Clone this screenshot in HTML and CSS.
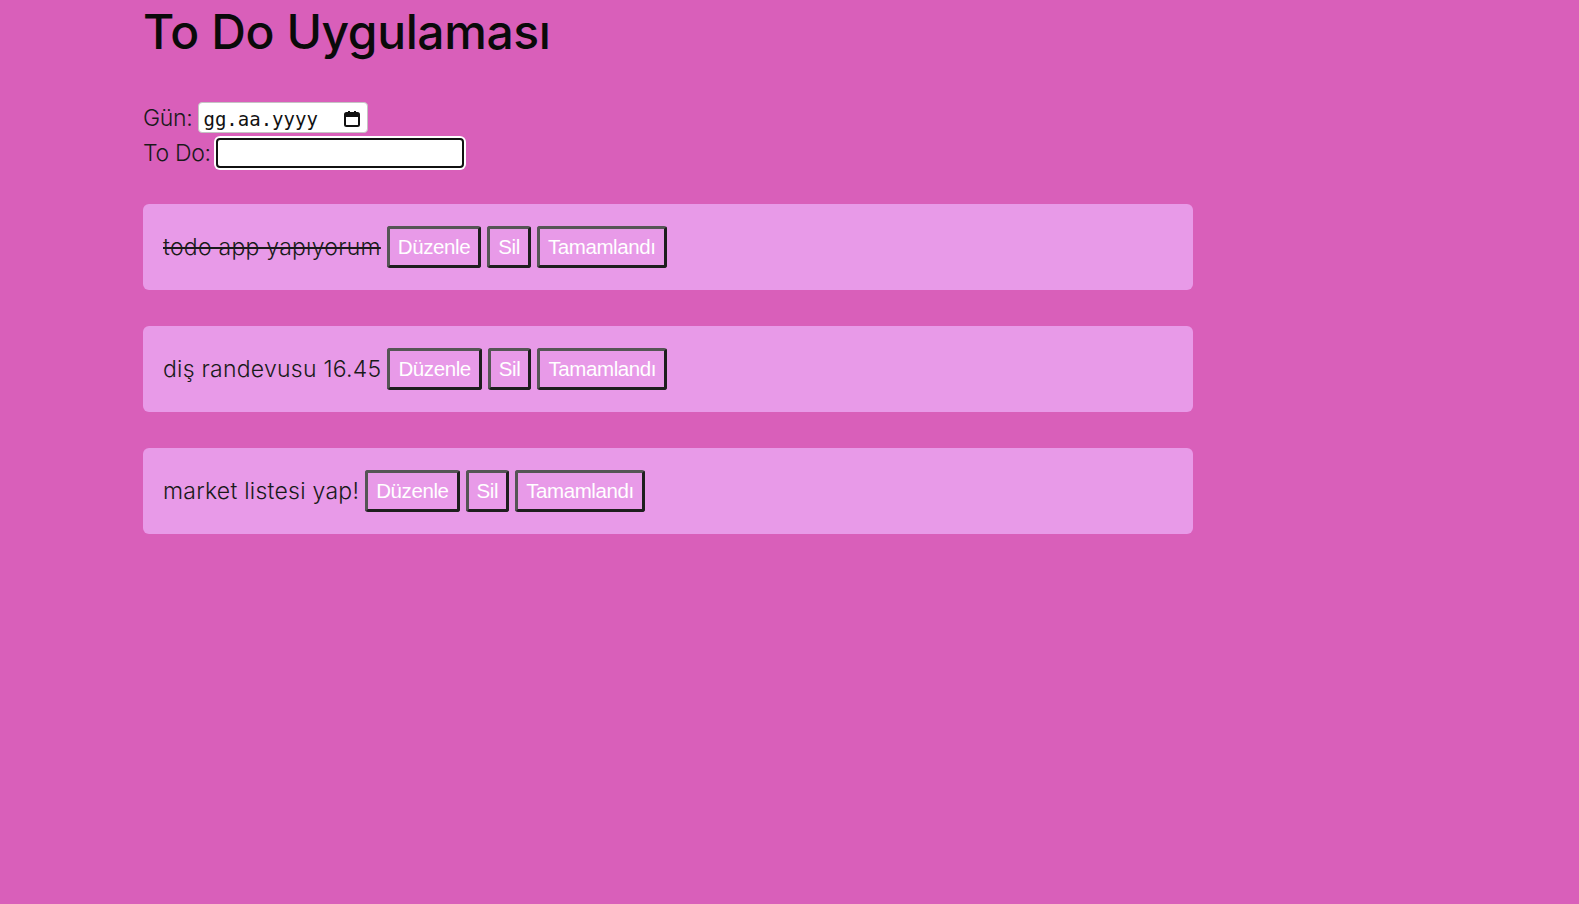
FILE: index.html
```html
<!DOCTYPE html>
<html lang="tr">
<head>
<meta charset="utf-8">
<title>To Do Uygulaması</title>
<link rel="stylesheet" href="styles.css">
</head>
<body>
<div class="app">
  <h1 class="title">To Do Uygulaması</h1>
  <form class="form">
    <div class="field">
      <label class="label" for="gun">Gün:</label>
      <span class="date-box">
        <input class="date-input" id="gun" type="text" placeholder="gg.aa.yyyy">
        <svg class="cal-icon" width="18" height="18" viewBox="0 0 18 18" aria-hidden="true">
          <rect x="2" y="3" width="14" height="13" rx="1.5" fill="none" stroke="#111" stroke-width="2"/>
          <rect x="2" y="3" width="14" height="4" fill="#111"/>
          <rect x="5" y="1" width="2" height="3" fill="#111"/>
          <rect x="11" y="1" width="2" height="3" fill="#111"/>
        </svg>
      </span>
    </div>
    <div class="field">
      <label class="label" for="todo">To Do:</label>
      <input class="text-input" id="todo" type="text">
    </div>
  </form>
  <ul class="list">
    <li class="card">
      <span class="task done">todo app yapıyorum</span>
      <button class="btn" type="button">Düzenle</button>
      <button class="btn" type="button">Sil</button>
      <button class="btn" type="button">Tamamlandı</button>
    </li>
    <li class="card">
      <span class="task">diş randevusu 16.45</span>
      <button class="btn" type="button">Düzenle</button>
      <button class="btn" type="button">Sil</button>
      <button class="btn" type="button">Tamamlandı</button>
    </li>
    <li class="card">
      <span class="task">market listesi yap!</span>
      <button class="btn" type="button">Düzenle</button>
      <button class="btn" type="button">Sil</button>
      <button class="btn" type="button">Tamamlandı</button>
    </li>
  </ul>
</div>
</body>
</html>
```

FILE: styles.css
```css
html, body {
  margin: 0;
  padding: 0;
  background: #d95fba;
}
body {
  font-family: Inter, "Noto Sans", sans-serif;
  color: #111;
  min-height: 904px;
}
.app {
  width: 1050px;
  padding-left: 143px;
}
.title {
  margin: 0;
  padding-top: 2px;
  font-size: 48px;
  font-weight: 500;
  letter-spacing: -0.4px;
  line-height: 60px;
  color: #0a0a0a;
}
.form {
  margin-top: 40px;
  display: flex;
  flex-direction: column;
  gap: 5px;
}
.field {
  display: flex;
  align-items: center;
  gap: 6px;
}
.label {
  font-size: 23px;
  font-weight: 300;
  color: #1a1a1a;
  letter-spacing: -0.3px;
}
.date-box {
  display: flex;
  align-items: center;
  width: 170px;
  height: 31px;
  box-sizing: border-box;
  border: 1px solid #c4c4c4;
  border-radius: 4px;
  background: #fff;
  padding: 2px 6px 0 4px;
}
.date-input {
  flex: 1;
  min-width: 0;
  border: none;
  outline: none;
  padding: 0;
  font-family: "DejaVu Sans Mono", "Liberation Mono", monospace;
  font-size: 19px;
  background: transparent;
}
.date-input::placeholder {
  color: #111;
  opacity: 1;
}
.cal-icon {
  flex: none;
}
.text-input {
  width: 248px;
  height: 30px;
  box-sizing: border-box;
  border: 2px solid #111;
  border-radius: 4px;
  box-shadow: 0 0 0 2px #fff;
  background: #fff;
  margin-left: -1px;
}
.list {
  list-style: none;
  margin: 36px 0 0;
  padding: 0;
  display: flex;
  flex-direction: column;
  gap: 36px;
}
.card {
  background: #e89ae8;
  border-radius: 6px;
  padding: 22px 20px;
  display: flex;
  align-items: center;
  gap: 6px;
}
.task {
  font-size: 23px;
  font-weight: 300;
  color: #1a1a1a;
  letter-spacing: 0.25px;
}
.task.done {
  text-decoration: line-through;
}
.btn {
  font-family: "Liberation Sans", Arial, sans-serif;
  font-size: 20.5px;
  color: #fff;
  background: transparent;
  height: 42px;
  padding: 0 8px;
  border: 3px solid;
  border-color: #555 #1e1e1e #1e1e1e #555;
  border-radius: 3px;
  letter-spacing: -0.4px;
}
```
